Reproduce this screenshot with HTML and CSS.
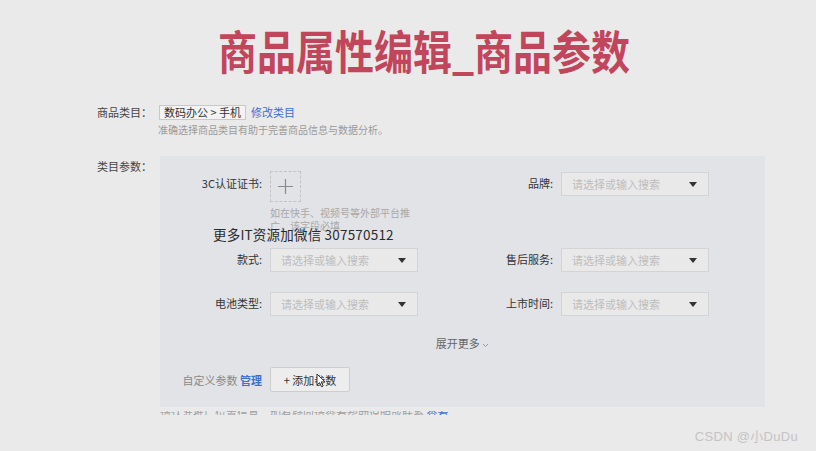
FILE: index.html
```html
<!DOCTYPE html>
<html lang="zh-CN">
<head>
    <meta charset="UTF-8">
    <meta name="viewport" content="width=device-width, initial-scale=1.0">
    <title>商品属性编辑_商品参数</title>
    <link rel="stylesheet" href="styles.css">
</head>
<body>
    <h1 class="title">商品属性编辑_商品参数</h1>

    <div class="form">
        <div class="form-row">
            <span class="form-label">商品类目：</span>
            <span class="cat-tag">数码办公 &gt; 手机</span>
            <a class="link" href="#">修改类目</a>
        </div>
        <p class="form-hint">准确选择商品类目有助于完善商品信息与数据分析。</p>

        <div class="form-row params-row">
            <span class="form-label">类目参数：</span>
            <div class="panel">
                <div class="param-grid">
                    <div class="param-label">3C认证证书:</div>
                    <div class="param-field">
                        <div class="upload">
                            <svg width="17" height="17" viewBox="0 0 17 17"><path d="M8.5 1v15M1 8.5h15" stroke="#8a8a8a" stroke-width="1.2" fill="none"/></svg>
                        </div>
                        <p class="upload-hint">如在快手、视频号等外部平台推广，该字段必填</p>
                    </div>
                    <div class="param-label">品牌:</div>
                    <div class="param-field">
                        <div class="select"><span>请选择或输入搜索</span><i class="caret"></i></div>
                    </div>

                    <div class="param-label">款式:</div>
                    <div class="param-field">
                        <div class="select"><span>请选择或输入搜索</span><i class="caret"></i></div>
                    </div>
                    <div class="param-label">售后服务:</div>
                    <div class="param-field">
                        <div class="select"><span>请选择或输入搜索</span><i class="caret"></i></div>
                    </div>

                    <div class="param-label">电池类型:</div>
                    <div class="param-field">
                        <div class="select"><span>请选择或输入搜索</span><i class="caret"></i></div>
                    </div>
                    <div class="param-label">上市时间:</div>
                    <div class="param-field">
                        <div class="select"><span>请选择或输入搜索</span><i class="caret"></i></div>
                    </div>
                </div>

                <div class="expand">展开更多 <svg width="7" height="5" viewBox="0 0 7 5"><path d="M1 1l2.5 2.5L6 1" stroke="#999" fill="none"/></svg></div>

                <div class="custom-row">
                    <div class="custom-label">自定义参数 <a class="link bold" href="#">管理</a></div>
                    <button class="add-btn">+ 添加参数</button>
                </div>
            </div>
        </div>

        <div class="cut-line"><span>请认准推广位置信息，如有疑问请查看帮助说明或联系 <a class="link" href="#">查看</a></span></div>
    </div>

    <div class="wechat-mark">更多IT资源加微信 307570512</div>

    <svg class="cursor" width="10" height="15" viewBox="0 0 10 15">
        <path d="M1 1v11l2.6-2.4 2 4.2 1.6-.8-2-4.1H9z" fill="#fff" stroke="#333" stroke-width="1"/>
    </svg>

    <div class="csdn-mark">CSDN @小DuDu</div>
</body>
</html>
```

FILE: styles.css
```css
body {
    margin: 0;
    height: 451px;
    overflow: hidden;
    position: relative;
    background-color: #eaeaea;
    color: #333;
    font-family: "Noto Sans CJK SC", "Liberation Sans", sans-serif;
    font-size: 11px;
}
.title {
    margin: 24px 0 0;
    padding-left: 32px;
    text-align: center;
    font-size: 39px;
    line-height: 50px;
    font-weight: 700;
    color: #c2465b;
    transform: scaleY(1.18);
}
.form {
    margin-top: 28px;
    padding-left: 97px;
}
.form-row {
    display: flex;
    align-items: center;
    line-height: 20px;
}
.form-label {
    width: 62px;
    color: #444;
}
.cat-tag {
    display: inline-block;
    padding: 0 4px;
    line-height: 13px;
    border: 1px solid #c9c9c9;
    background-color: #f3f3f3;
    color: #333;
}
.link {
    color: #3c6fd6;
    text-decoration: none;
}
.link.bold {
    font-weight: 700;
}
.cat-tag + .link {
    margin-left: 5px;
}
.form-hint {
    margin: 1px 0 0 61px;
    font-size: 10px;
    line-height: 14px;
    color: #9a9a9a;
}
.params-row {
    margin-top: 19px;
    align-items: flex-start;
}
.params-row .form-label {
    width: 63px;
}
.panel {
    width: 605px;
    height: 251px;
    box-sizing: border-box;
    padding-top: 16px;
    background-color: #e2e3e7;
}
.param-grid {
    display: grid;
    grid-template-columns: 110px 148px 143px 148px;
    grid-template-rows: 76px 44px 24px;
    align-items: start;
}
.param-label {
    text-align: right;
    padding-right: 8px;
    line-height: 23px;
    color: #333;
}
.upload {
    width: 31px;
    height: 31px;
    box-sizing: border-box;
    margin-top: -1px;
    border: 1px dashed #c4c4c4;
    display: flex;
    align-items: center;
    justify-content: center;
}
.upload-hint {
    width: 142px;
    margin: 4px 0 0;
    font-size: 10px;
    line-height: 13px;
    color: #a8a8a8;
}
.select {
    height: 24px;
    box-sizing: border-box;
    border: 1px solid #d4d4d6;
    background-color: #e9e9ea;
    padding: 0 10px;
    display: flex;
    align-items: center;
    justify-content: space-between;
    color: #bdbdbd;
}
.caret {
    width: 0;
    height: 0;
    border-left: 4px solid transparent;
    border-right: 4px solid transparent;
    border-top: 5px solid #333;
    margin-right: 1px;
}
.expand {
    margin-top: 17px;
    text-align: center;
    line-height: 20px;
    color: #666;
}
.expand svg {
    vertical-align: middle;
}
.custom-row {
    margin-top: 14px;
    display: flex;
    align-items: center;
}
.custom-label {
    width: 110px;
    box-sizing: border-box;
    padding-right: 8px;
    text-align: right;
    color: #8a8a8a;
}
.add-btn {
    width: 80px;
    height: 25px;
    border: 1px solid #cdcdcd;
    border-radius: 2px;
    background-color: #ededee;
    color: #333;
    font-family: inherit;
    font-size: 11px;
    padding: 0;
}
.cut-line {
    margin: 4px 0 0 63px;
    height: 4px;
    overflow: hidden;
    color: #a0a0a0;
    line-height: 11px;
}
.cut-line span {
    display: block;
    margin-top: -3px;
}
.wechat-mark {
    position: absolute;
    left: 213px;
    top: 225px;
    font-size: 13.5px;
    line-height: 18px;
    color: #2b2b2b;
    letter-spacing: 0.2px;
}
.cursor {
    position: absolute;
    left: 316px;
    top: 373px;
}
.csdn-mark {
    position: absolute;
    right: 18px;
    top: 426px;
    font-family: "Liberation Sans", "Noto Sans CJK SC", sans-serif;
    font-size: 13px;
    color: #c4c4c4;
    letter-spacing: 0.3px;
}
```
